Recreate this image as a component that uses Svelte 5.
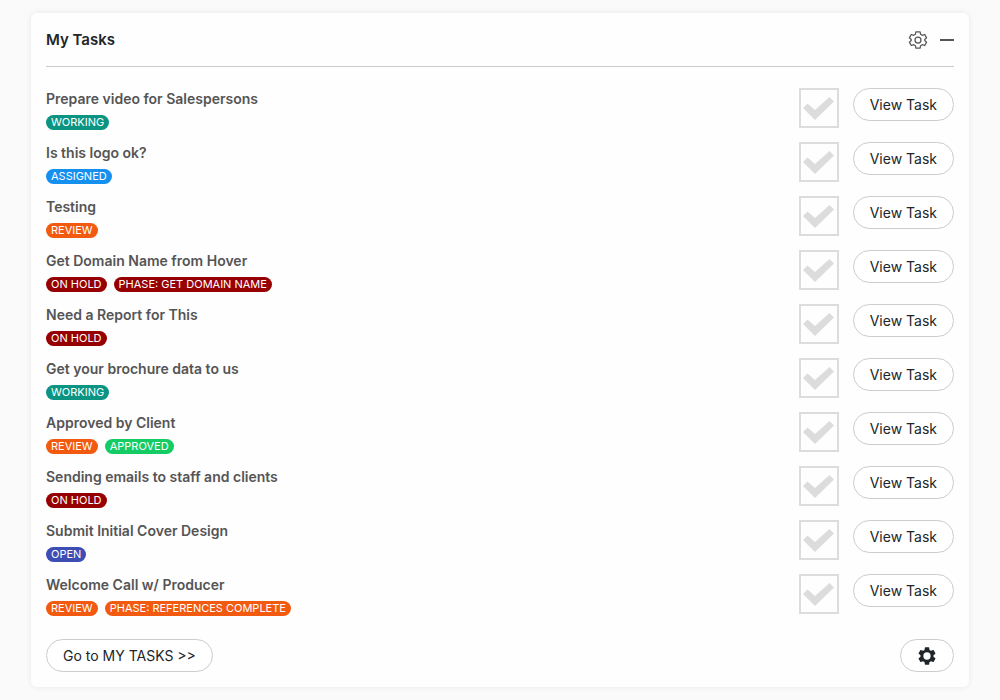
<script lang="ts">
  interface Tag {
    label: string;
    tone: string;
  }

  interface Task {
    id: number;
    title: string;
    tags: Tag[];
  }

  const tasks: Task[] = [
    { id: 1, title: 'Prepare video for Salespersons', tags: [{ label: 'Working', tone: 'teal' }] },
    { id: 2, title: 'Is this logo ok?', tags: [{ label: 'Assigned', tone: 'blue' }] },
    { id: 3, title: 'Testing', tags: [{ label: 'Review', tone: 'orange' }] },
    {
      id: 4,
      title: 'Get Domain Name from Hover',
      tags: [{ label: 'On Hold', tone: 'red' }, { label: 'Phase: Get Domain Name', tone: 'red' }],
    },
    { id: 5, title: 'Need a Report for This', tags: [{ label: 'On Hold', tone: 'red' }] },
    { id: 6, title: 'Get your brochure data to us', tags: [{ label: 'Working', tone: 'teal' }] },
    {
      id: 7,
      title: 'Approved by Client',
      tags: [{ label: 'Review', tone: 'orange' }, { label: 'Approved', tone: 'green' }],
    },
    { id: 8, title: 'Sending emails to staff and clients', tags: [{ label: 'On Hold', tone: 'red' }] },
    { id: 9, title: 'Submit Initial Cover Design', tags: [{ label: 'Open', tone: 'indigo' }] },
    {
      id: 10,
      title: 'Welcome Call w/ Producer',
      tags: [{ label: 'Review', tone: 'orange' }, { label: 'Phase: References Complete', tone: 'orange' }],
    },
  ];

  let collapsed = $state(false);
  let done: Record<number, boolean> = $state({});
</script>

<main class="page">
  <section class="panel">
    <header class="panel-header">
      <h2 class="panel-title">My Tasks</h2>
      <div class="panel-tools">
        <button class="icon-btn" aria-label="Settings">
          <svg class="gear-outline" viewBox="0 0 24 24">
            <path d="M9.500 2.200h5l.6 3 2 1.200 3-1 2.200 4-2.200 1.900v1.400l2.200 1.900-2.200 4-3-1-2 1.200-.6 3h-5l-.6-3-2-1.200-3 1-2.200-4 2.200-1.900v-1.400L1.700 9.400l2.200-4 3 1 2-1.200z" />
            <circle cx="12" cy="12" r="3.6" />
          </svg>
        </button>
        <button class="icon-btn" aria-label="Collapse" onclick={() => (collapsed = !collapsed)}>
          <svg class="minus" viewBox="0 0 14 14">
            <path d="M0 7h14" />
          </svg>
        </button>
      </div>
    </header>

    {#if !collapsed}
      <ul class="task-list">
        {#each tasks as task (task.id)}
          <li class="task">
            <div class="task-info">
              <h3 class="task-title">{task.title}</h3>
              <div class="tags">
                {#each task.tags as tag}
                  <span class="tag {tag.tone}">{tag.label}</span>
                {/each}
              </div>
            </div>
            <label class="check">
              <input type="checkbox" aria-label="Complete {task.title}" bind:checked={done[task.id]} />
              <svg viewBox="0 0 31 23">
                <path d="M0 11l4.5-4.5L12 13 26.500 0 31 4.500 12 23z" />
              </svg>
            </label>
            <button class="pill">View Task</button>
          </li>
        {/each}
      </ul>

      <footer class="panel-footer">
        <button class="pill">Go to MY TASKS &gt;&gt;</button>
        <button class="pill" aria-label="Task settings">
          <svg class="gear-solid" viewBox="1 1 22 22">
            <path d="M19.14 12.94c.04-.3.06-.61.06-.94s-.02-.64-.07-.94l2.03-1.58a.49.49 0 0 0 .12-.61l-1.92-3.32a.49.49 0 0 0-.59-.22l-2.39.96a7 7 0 0 0-1.62-.94l-.36-2.54a.48.48 0 0 0-.48-.41h-3.84a.47.47 0 0 0-.47.41l-.36 2.54c-.59.24-1.13.57-1.62.94l-2.39-.96a.48.48 0 0 0-.59.22L2.74 8.87a.48.48 0 0 0 .12.61l2.03 1.58c-.05.3-.09.63-.09.94s.02.64.07.94l-2.03 1.58a.49.49 0 0 0-.12.61l1.92 3.32c.12.22.37.29.59.22l2.39-.96c.5.38 1.03.7 1.62.94l.36 2.54c.05.24.24.41.48.41h3.84c.24 0 .44-.17.47-.41l.36-2.54a7 7 0 0 0 1.62-.94l2.39.96c.22.08.47 0 .59-.22l1.92-3.32a.48.48 0 0 0-.12-.61zM12 16a4 4 0 1 1 0-8 4 4 0 0 1 0 8z" />
          </svg>
        </button>
      </footer>
    {/if}
  </section>
</main>

<style>
  :global(body) {
    margin: 0;
    background: #fafafa;
  }

  .page {
    padding: 13px 31px;
    font-family: Inter, 'Liberation Sans', sans-serif;
    color: #212529;
  }

  .panel {
    padding: 0 15px 15px;
    background: #fefefe;
    border-radius: 6px;
    box-shadow: 0 0 6px rgba(0, 0, 0, 0.08);
  }

  .panel-header {
    display: flex;
    align-items: center;
    justify-content: space-between;
    height: 53px;
    border-bottom: 1px solid #ccc;
  }

  .panel-title {
    margin: 0;
    font-size: 15px;
    font-weight: 600;
  }

  .panel-tools {
    display: flex;
    align-items: center;
    gap: 12px;
  }

  .icon-btn {
    display: flex;
    padding: 0;
    border: 0;
    background: none;
    cursor: pointer;
  }

  .gear-outline {
    width: 20px;
    height: 20px;
    fill: none;
    stroke: #555;
    stroke-width: 1.5;
    stroke-linejoin: round;
  }

  .minus {
    width: 14px;
    height: 14px;
    stroke: #555;
    stroke-width: 2;
  }

  .task-list {
    display: flex;
    flex-direction: column;
    gap: 14px;
    margin: 0;
    padding: 21px 0 0;
    list-style: none;
  }

  .task {
    display: flex;
    align-items: flex-start;
    height: 40px;
  }

  .task-info {
    flex: 1;
    min-width: 0;
  }

  .task-title {
    margin: 0 0 5px;
    font-size: 14px;
    font-weight: 600;
    line-height: 22px;
    color: #555;
  }

  .tags {
    display: flex;
    gap: 7px;
  }

  .tag {
    padding: 0 5px;
    border-radius: 8px;
    font-size: 11px;
    font-weight: 400;
    line-height: 15px;
    text-transform: uppercase;
    color: #fff;
  }

  .teal {
    background: #0b9482;
  }

  .blue {
    background: #1590ee;
  }

  .orange {
    background: #f25a10;
  }

  .red {
    background: #970003;
  }

  .green {
    background: #14cb64;
  }

  .indigo {
    background: #3e4db3;
  }

  .check {
    display: grid;
    place-items: center;
    margin-right: 14px;
    cursor: pointer;
  }

  .check input,
  .check svg {
    grid-area: 1 / 1;
  }

  .check input {
    box-sizing: border-box;
    width: 40px;
    height: 40px;
    margin: 0;
    appearance: none;
    border: 2px solid #dcdcdc;
    cursor: pointer;
  }

  .check svg {
    width: 31px;
    height: 23px;
    fill: #dcdcdc;
    pointer-events: none;
  }

  .check input:checked + svg {
    fill: #14cb64;
  }

  .pill {
    padding: 0 16px;
    height: 33px;
    border: 1px solid #ccc;
    border-radius: 17px;
    background: #fff;
    font-family: inherit;
    font-size: 14px;
    color: #212529;
    cursor: pointer;
  }

  .panel-footer {
    display: flex;
    justify-content: space-between;
    padding-top: 25px;
  }

  .gear-solid {
    display: block;
    width: 20px;
    height: 20px;
    fill: #212529;
  }
</style>
